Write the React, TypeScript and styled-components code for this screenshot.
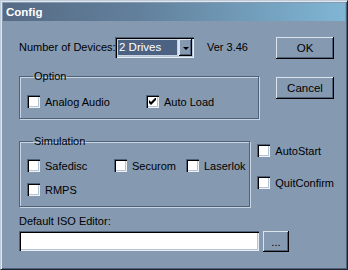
import styled, { createGlobalStyle } from 'styled-components'

const GlobalStyle = createGlobalStyle`
  html, body {
    margin: 0;
    padding: 0;
    background: #8599b1;
  }
  body {
    font-family: "Liberation Sans", Arial, sans-serif;
    font-size: 11px;
    color: #000;
  }
`

const FACE = '#8599b1'
const LIGHT = '#dbe3ec'
const SHADOW = '#50617a'

const Window = styled.div`
  box-sizing: border-box;
  width: 348px;
  height: 270px;
  padding: 1px;
  background: ${FACE};
  border-top: 1px solid #bfcbd9;
  border-left: 1px solid #bfcbd9;
  border-right: 1px solid #1c2230;
  border-bottom: 1px solid #1c2230;
  box-shadow: inset 1px 1px #dfe7ef, inset -1px -1px ${SHADOW};
  display: flex;
  flex-direction: column;
`

const TitleBar = styled.div`
  height: 18px;
  margin: 1px 1px 0;
  background: linear-gradient(to right, #566a84 0%, #62809c 40%, #7fb6d4 100%);
  color: #fff;
  font-weight: bold;
  font-size: 11.5px;
  line-height: 18px;
  padding-left: 3px;
`

const Body = styled.div`
  display: flex;
  flex-direction: column;
  padding: 16px 12px 0 17px;
`

const Row = styled.div<{ $mt?: number }>`
  display: flex;
  align-items: flex-start;
  margin-top: ${p => p.$mt ?? 0}px;
`

const Label = styled.span`
  line-height: 13px;
  white-space: nowrap;
`

const TopLabel = styled(Label)`
  margin-top: 4px;
  width: 96px;
`

const Version = styled(Label)`
  margin: 4px 0 0 13px;
`

const Select = styled.div`
  box-sizing: border-box;
  width: 79px;
  height: 21px;
  background: ${LIGHT};
  box-shadow: inset 1px 1px ${SHADOW}, inset 2px 2px #000, inset -1px -1px #e8eef4, inset -2px -2px #b6c3d2;
  padding: 2px;
  display: flex;
`

const SelectValue = styled.div`
  flex: 1;
  background: #4c6282;
  border: 1px solid #c6d2e0;
  color: #fff;
  font-size: 11.5px;
  line-height: 13px;
  padding: 1px 0 0 1px;
  margin-right: 1px;
`

const SelectArrow = styled.div`
  width: 13px;
  background: ${FACE};
  box-shadow: inset -1px -1px #000, inset 1px 1px ${LIGHT}, inset -2px -2px ${SHADOW};
  display: flex;
  align-items: center;
  justify-content: center;
  &::after {
    content: '';
    border-left: 3px solid transparent;
    border-right: 3px solid transparent;
    border-top: 3px solid #000;
    margin-top: 1px;
  }
`

const Button = styled.button<{ $w?: number; $h?: number; $mt?: number; $ml?: number }>`
  box-sizing: border-box;
  appearance: none;
  border: 0;
  width: ${p => p.$w ?? 58}px;
  height: ${p => p.$h ?? 22}px;
  margin: ${p => p.$mt ?? 0}px 0 0 ${p => p.$ml ?? 0}px;
  background: ${FACE};
  box-shadow: inset -1px -1px #000, inset 1px 1px ${LIGHT}, inset -2px -2px ${SHADOW};
  font-family: inherit;
  font-size: 11.5px;
  color: #000;
  padding: 0;
`

const PushRight = styled.div`
  margin-left: auto;
`

const Group = styled.fieldset<{ $h: number }>`
  box-sizing: border-box;
  width: 240px;
  height: ${p => p.$h}px;
  margin: 0;
  padding: 0 0 0 7px;
  border: 1px solid ${SHADOW};
  box-shadow: inset 1px 1px #c9d5e2, 1px 1px #c9d5e2;
  border-radius: 0;
  min-inline-size: 0;
`

const Legend = styled.legend`
  padding: 0 1px;
  margin-left: 6px;
  line-height: 13px;
  font-size: 11px;
`

const CheckRow = styled.div<{ $mt: number }>`
  display: flex;
  margin-top: ${p => p.$mt}px;
`

const CheckGrid = styled.div`
  display: grid;
  grid-template-columns: 87px 72px auto;
  row-gap: 11px;
  margin-top: 11px;
`

const CheckItem = styled.label<{ $w?: number }>`
  display: flex;
  align-items: center;
  gap: 5px;
  height: 13px;
  width: ${p => (p.$w ? `${p.$w}px` : 'auto')};
  white-space: nowrap;
`

const Box = styled.span`
  box-sizing: border-box;
  width: 13px;
  height: 13px;
  flex: none;
  background: #fff;
  box-shadow: inset 1px 1px ${SHADOW}, inset 2px 2px #000, inset -1px -1px #eef2f7, inset -2px -2px #b6c3d2;
  display: flex;
  align-items: center;
  justify-content: center;
`

const SideChecks = styled.div`
  display: flex;
  flex-direction: column;
  gap: 19px;
  margin: 9px 0 0 7px;
`

const TextInput = styled.div`
  box-sizing: border-box;
  width: 240px;
  height: 20px;
  background: #fff;
  box-shadow: inset 1px 1px ${SHADOW}, inset 2px 2px #000, inset -1px -1px #e8eef4, inset -2px -2px #b6c3d2;
`

function Check({ label, checked = false, w }: { label: string; checked?: boolean; w?: number }) {
  return (
    <CheckItem $w={w}>
      <Box>
        {checked && (
          <svg width="7" height="7" viewBox="0 0 7 7">
            <path d="M0 2v3l2 2l5-5V-1L2 4z" fill="#000" />
          </svg>
        )}
      </Box>
      <span>{label}</span>
    </CheckItem>
  )
}

export default function App() {
  return (
    <>
      <GlobalStyle />
      <Window>
        <TitleBar>Config</TitleBar>
        <Body>
          <Row>
            <TopLabel>Number of Devices:</TopLabel>
            <Select>
              <SelectValue>2 Drives</SelectValue>
              <SelectArrow />
            </Select>
            <Version>Ver 3.46</Version>
            <PushRight>
              <Button>OK</Button>
            </PushRight>
          </Row>

          <Row $mt={11}>
            <Group $h={49}>
              <Legend>Option</Legend>
              <CheckRow $mt={12}>
                <Check label="Analog Audio" w={119} />
                <Check label="Auto Load" checked />
              </CheckRow>
            </Group>
            <PushRight>
              <Button $mt={7}>Cancel</Button>
            </PushRight>
          </Row>

          <Row $mt={16}>
            <Group $h={72}>
              <Legend>Simulation</Legend>
              <CheckGrid>
                <Check label="Safedisc" />
                <Check label="Securom" />
                <Check label="Laserlok" />
                <Check label="RMPS" />
              </CheckGrid>
            </Group>
            <SideChecks>
              <Check label="AutoStart" />
              <Check label="QuitConfirm" />
            </SideChecks>
          </Row>

          <Row $mt={8}>
            <Label>Default ISO Editor:</Label>
          </Row>
          <Row $mt={3}>
            <TextInput />
            <Button $w={26} $h={21} $ml={4}>...</Button>
          </Row>
        </Body>
      </Window>
    </>
  )
}
